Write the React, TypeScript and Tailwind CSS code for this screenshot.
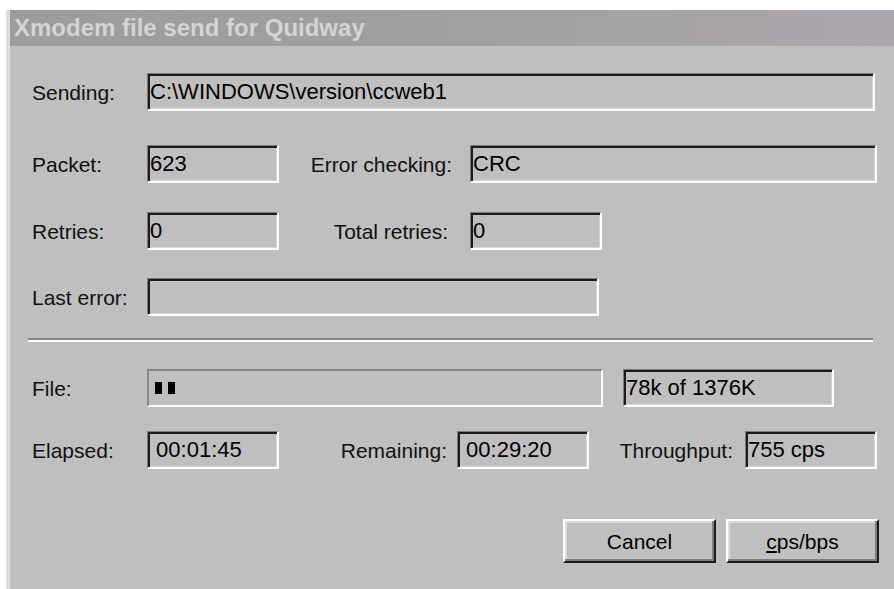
import React from 'react';

// Win95-style sunken edit box
const Field: React.FC<{ w: string; value?: string }> = ({ w, value }) => (
  <div
    className={`${w} h-[38px] flex items-center pl-[2px] border-t border-l border-b-2 border-r-2 border-t-[#7a7a7a] border-l-[#7a7a7a] border-b-white border-r-white shadow-[inset_2px_2px_0_#1c1c1c,inset_-1px_-1px_0_#d6d6d6] text-[22px] text-black whitespace-pre leading-none`}
  >
    {value}
  </div>
);

// Raised push button
const Button: React.FC<{ children: React.ReactNode }> = ({ children }) => (
  <button className="w-[153px] h-[44px] flex items-center justify-center border-t-2 border-l-2 border-b-2 border-r-2 border-t-white border-l-white border-b-[#1a1a1a] border-r-[#1a1a1a] shadow-[inset_-2px_-2px_0_#7e7e7e,inset_2px_2px_0_#dcdcdc] text-[21px] text-black bg-[#bfbfbf] leading-none">
    {children}
  </button>
);

const Label: React.FC<{ children: React.ReactNode; className?: string }> = ({ children, className }) => (
  <span className={`text-[21px] text-[#111] leading-none ${className ?? ''}`}>{children}</span>
);

const App: React.FC = () => {
  return (
    <div
      className="w-[894px] h-[589px] bg-white pt-[10px] pl-[6px] overflow-hidden"
      style={{ fontFamily: '"Liberation Sans", Arial, sans-serif' }}
    >
      <div className="h-full border-l-4 border-[#dedede] bg-[#bfbfbf] flex flex-col">
        {/* caption */}
        <div className="h-[36px] flex items-center pl-[4px] bg-gradient-to-r from-[#9c9c9c] via-[#a0a0a0] to-[#aca6ac]">
          <span className="text-[24px] font-bold text-[#d6d3d6] leading-none">Xmodem file send for Quidway</span>
        </div>

        <div className="flex flex-col pl-[22px] pt-[27px]">
          <div className="flex items-center">
            <Label className="w-[115px]">Sending:</Label>
            <Field w="w-[728px]" value="C:\WINDOWS\version\ccweb1" />
          </div>

          <div className="flex items-center mt-[34px]">
            <Label className="w-[115px]">Packet:</Label>
            <Field w="w-[132px]" value="623" />
            <Label className="w-[191px] text-right pr-[18px]">Error checking:</Label>
            <Field w="w-[407px]" value="CRC" />
          </div>

          <div className="flex items-center mt-[29px]">
            <Label className="w-[115px]">Retries:</Label>
            <Field w="w-[132px]" value="0" />
            <Label className="w-[191px] text-right pr-[22px]">Total retries:</Label>
            <Field w="w-[132px]" value="0" />
          </div>

          <div className="flex items-center mt-[28px]">
            <Label className="w-[115px]">Last error:</Label>
            <Field w="w-[452px]" />
          </div>

          {/* etched separator */}
          <div className="mt-[22px] ml-[-4px] w-[845px] h-[4px] border-t-2 border-b-2 border-t-[#858585] border-b-white" />

          <div className="flex items-center mt-[27px]">
            <Label className="w-[115px]">File:</Label>
            <div className="w-[456px] h-[38px] flex items-center gap-[6px] pl-[6px] border-t-2 border-l-2 border-b-2 border-r-2 border-t-[#878787] border-l-[#878787] border-b-white border-r-white">
              <div className="w-[7px] h-[12px] bg-black" />
              <div className="w-[7px] h-[12px] bg-black" />
            </div>
            <div className="ml-[20px]">
              <Field w="w-[211px]" value="78k of 1376K" />
            </div>
          </div>

          <div className="flex items-center mt-[24px]">
            <Label className="w-[115px]">Elapsed:</Label>
            <Field w="w-[132px]" value=" 00:01:45" />
            <Label className="w-[178px] text-right pr-[10px]">Remaining:</Label>
            <Field w="w-[132px]" value=" 00:29:20" />
            <Label className="w-[156px] text-right pr-[12px]">Throughput:</Label>
            <Field w="w-[132px]" value="755 cps" />
          </div>

          <div className="flex justify-end gap-[10px] mt-[50px] pr-[15px]">
            <Button>Cancel</Button>
            <Button>
              <span>
                <span className="underline underline-offset-2">c</span>ps/bps
              </span>
            </Button>
          </div>
        </div>
      </div>
    </div>
  );
};

export default App;
